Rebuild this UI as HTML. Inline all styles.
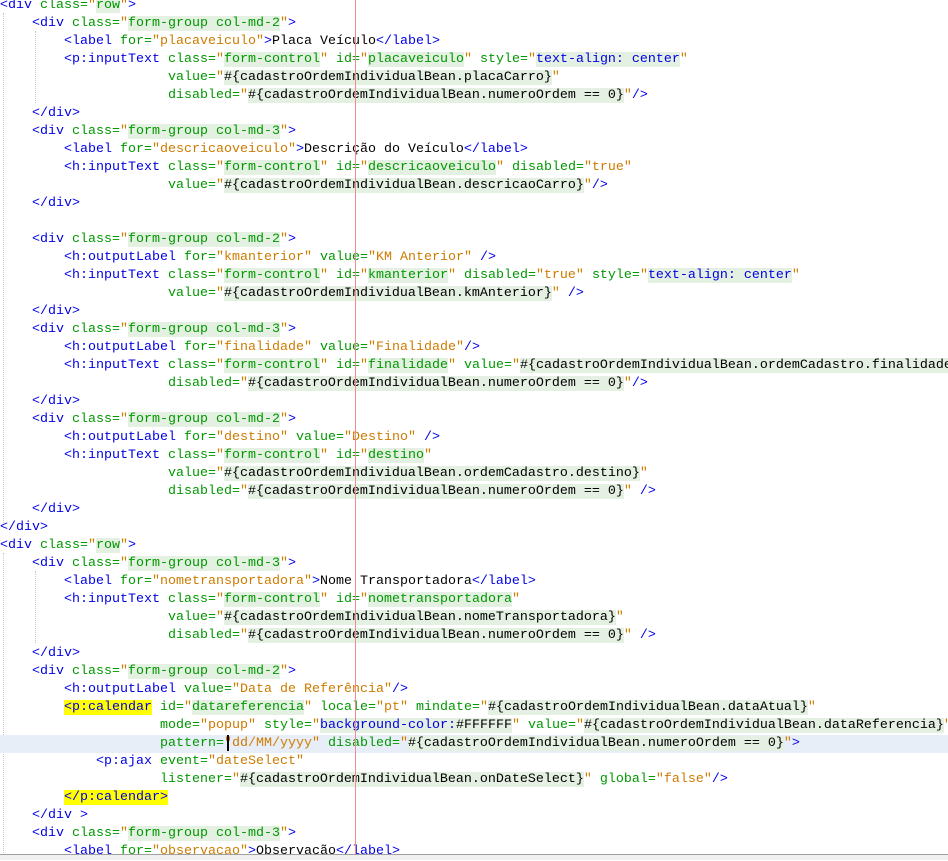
<!DOCTYPE html>
<html><head><meta charset="utf-8"><style>
html,body{margin:0;padding:0;width:948px;height:859px;overflow:hidden;background:#fff}
#c{position:absolute;left:0;top:-3px;width:948px;font-family:"Liberation Mono",monospace;font-size:13.33px;line-height:18px;color:#000}
#c div{height:18px;white-space:pre;overflow:visible}
b{font-weight:normal;color:#0000e6}
em{font-style:normal;color:#009900}
s{text-decoration:none;color:#ce7b00}
i{font-style:normal;color:#009900;background:#e4f0e1}
u{text-decoration:none;color:#000;background:#e4f0e1}
var{font-style:normal;color:#0000e6;background:#e4f0e1}
.y{background:#ffff00}
.cur{background:#e8eef8}
#m{position:absolute;left:355px;top:0;width:1px;height:855px;background:#f08c8c}
#bot{position:absolute;left:0;top:854px;width:948px;height:5px;background:#f0f0f0;border-top:1px solid #a0a0a0}
#k{position:absolute;left:227px;top:735px;width:2px;height:16px;background:#000}
.gd{position:absolute;width:0;border-left:1px dotted #c8c8c8}
</style></head><body>
<div class="gd" style="left:3px;top:13px;height:510px"></div>
<div class="gd" style="left:3px;top:553px;height:300px"></div>
<div class="gd" style="left:35px;top:31px;height:72px"></div>
<div class="gd" style="left:35px;top:571px;height:72px"></div>
<div id="c"><div><b>&lt;div</b> <em>class=</em><s>"</s><i>row</i><s>"</s><b>&gt;</b></div><div>    <b>&lt;div</b> <em>class=</em><s>"</s><i>form-group col-md-2</i><s>"</s><b>&gt;</b></div><div>        <b>&lt;label</b> <em>for=</em><s>"placaveiculo"</s><b>&gt;</b>Placa Veículo<b>&lt;/label&gt;</b></div><div>        <b>&lt;p:inputText</b> <em>class=</em><s>"</s><i>form-control</i><s>"</s> <em>id=</em><s>"</s><i>placaveiculo</i><s>"</s> <em>style=</em><s>"</s><var>text-align: center</var><s>"</s></div><div>                     <em>value=</em><s>"</s><u>#{cadastroOrdemIndividualBean.placaCarro}</u><s>"</s></div><div>                     <em>disabled=</em><s>"</s><u>#{cadastroOrdemIndividualBean.numeroOrdem == 0}</u><s>"</s><b>/&gt;</b></div><div>    <b>&lt;/div&gt;</b></div><div>    <b>&lt;div</b> <em>class=</em><s>"</s><i>form-group col-md-3</i><s>"</s><b>&gt;</b></div><div>        <b>&lt;label</b> <em>for=</em><s>"descricaoveiculo"</s><b>&gt;</b>Descrição do Veículo<b>&lt;/label&gt;</b></div><div>        <b>&lt;h:inputText</b> <em>class=</em><s>"</s><i>form-control</i><s>"</s> <em>id=</em><s>"</s><i>descricaoveiculo</i><s>"</s> <em>disabled=</em><s>"true"</s></div><div>                     <em>value=</em><s>"</s><u>#{cadastroOrdemIndividualBean.descricaoCarro}</u><s>"</s><b>/&gt;</b></div><div>    <b>&lt;/div&gt;</b></div><div> </div><div>    <b>&lt;div</b> <em>class=</em><s>"</s><i>form-group col-md-2</i><s>"</s><b>&gt;</b></div><div>        <b>&lt;h:outputLabel</b> <em>for=</em><s>"kmanterior"</s> <em>value=</em><s>"KM Anterior"</s> <b>/&gt;</b></div><div>        <b>&lt;h:inputText</b> <em>class=</em><s>"</s><i>form-control</i><s>"</s> <em>id=</em><s>"</s><i>kmanterior</i><s>"</s> <em>disabled=</em><s>"true"</s> <em>style=</em><s>"</s><var>text-align: center</var><s>"</s></div><div>                     <em>value=</em><s>"</s><u>#{cadastroOrdemIndividualBean.kmAnterior}</u><s>"</s> <b>/&gt;</b></div><div>    <b>&lt;/div&gt;</b></div><div>    <b>&lt;div</b> <em>class=</em><s>"</s><i>form-group col-md-3</i><s>"</s><b>&gt;</b></div><div>        <b>&lt;h:outputLabel</b> <em>for=</em><s>"finalidade"</s> <em>value=</em><s>"Finalidade"</s><b>/&gt;</b></div><div>        <b>&lt;h:inputText</b> <em>class=</em><s>"</s><i>form-control</i><s>"</s> <em>id=</em><s>"</s><i>finalidade</i><s>"</s> <em>value=</em><s>"</s><u>#{cadastroOrdemIndividualBean.ordemCadastro.finalidade}</u></div><div>                     <em>disabled=</em><s>"</s><u>#{cadastroOrdemIndividualBean.numeroOrdem == 0}</u><s>"</s><b>/&gt;</b></div><div>    <b>&lt;/div&gt;</b></div><div>    <b>&lt;div</b> <em>class=</em><s>"</s><i>form-group col-md-2</i><s>"</s><b>&gt;</b></div><div>        <b>&lt;h:outputLabel</b> <em>for=</em><s>"destino"</s> <em>value=</em><s>"Destino"</s> <b>/&gt;</b></div><div>        <b>&lt;h:inputText</b> <em>class=</em><s>"</s><i>form-control</i><s>"</s> <em>id=</em><s>"</s><i>destino</i><s>"</s></div><div>                     <em>value=</em><s>"</s><u>#{cadastroOrdemIndividualBean.ordemCadastro.destino}</u><s>"</s></div><div>                     <em>disabled=</em><s>"</s><u>#{cadastroOrdemIndividualBean.numeroOrdem == 0}</u><s>"</s> <b>/&gt;</b></div><div>    <b>&lt;/div&gt;</b></div><div><b>&lt;/div&gt;</b></div><div><b>&lt;div</b> <em>class=</em><s>"</s><i>row</i><s>"</s><b>&gt;</b></div><div>    <b>&lt;div</b> <em>class=</em><s>"</s><i>form-group col-md-3</i><s>"</s><b>&gt;</b></div><div>        <b>&lt;label</b> <em>for=</em><s>"nometransportadora"</s><b>&gt;</b>Nome Transportadora<b>&lt;/label&gt;</b></div><div>        <b>&lt;h:inputText</b> <em>class=</em><s>"</s><i>form-control</i><s>"</s> <em>id=</em><s>"</s><i>nometransportadora</i><s>"</s></div><div>                     <em>value=</em><s>"</s><u>#{cadastroOrdemIndividualBean.nomeTransportadora}</u><s>"</s></div><div>                     <em>disabled=</em><s>"</s><u>#{cadastroOrdemIndividualBean.numeroOrdem == 0}</u><s>"</s> <b>/&gt;</b></div><div>    <b>&lt;/div&gt;</b></div><div>    <b>&lt;div</b> <em>class=</em><s>"</s><i>form-group col-md-2</i><s>"</s><b>&gt;</b></div><div>        <b>&lt;h:outputLabel</b> <em>value=</em><s>"Data de Referência"</s><b>/&gt;</b></div><div>        <b class="y">&lt;p:calendar</b> <em>id=</em><s>"</s><i>datareferencia</i><s>"</s> <em>locale=</em><s>"pt"</s> <em>mindate=</em><s>"</s><u>#{cadastroOrdemIndividualBean.dataAtual}</u><s>"</s></div><div>                    <em>mode=</em><s>"popup"</s> <em>style=</em><s>"</s><var>background-color:</var><u>#FFFFFF</u><s>"</s> <em>value=</em><s>"</s><u>#{cadastroOrdemIndividualBean.dataReferencia}</u><s>"</s></div><div class="cur">                    <em>pattern=</em><s>"dd/MM/yyyy"</s> <em>disabled=</em><s>"</s><u>#{cadastroOrdemIndividualBean.numeroOrdem == 0}</u><s>"</s><b>&gt;</b></div><div>            <b>&lt;p:ajax</b> <em>event=</em><s>"dateSelect"</s></div><div>                    <em>listener=</em><s>"</s><u>#{cadastroOrdemIndividualBean.onDateSelect}</u><s>"</s> <em>global=</em><s>"false"</s><b>/&gt;</b></div><div>        <b class="y">&lt;/p:calendar&gt;</b></div><div>    <b>&lt;/div &gt;</b></div><div>    <b>&lt;div</b> <em>class=</em><s>"</s><i>form-group col-md-3</i><s>"</s><b>&gt;</b></div><div>        <b>&lt;label</b> <em>for=</em><s>"observacao"</s><b>&gt;</b>Observação<b>&lt;/label&gt;</b></div></div>
<div id="m"></div>
<div id="k"></div>
<div id="bot"></div>
</body></html>
